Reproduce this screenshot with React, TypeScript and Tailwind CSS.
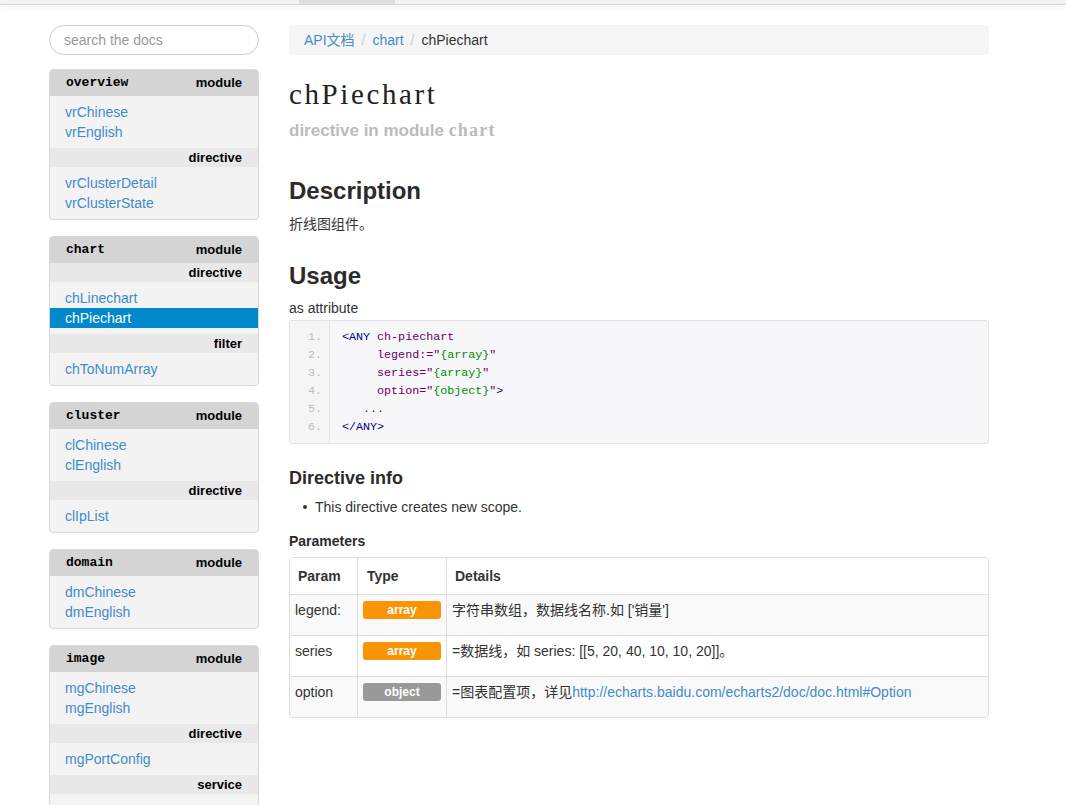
import React from 'react'

type Group = { kind?: string; items: string[] }
type Mod = { name: string; groups: Group[] }

const modules: Mod[] = [
    {
        name: 'overview',
        groups: [
            { items: ['vrChinese', 'vrEnglish'] },
            { kind: 'directive', items: ['vrClusterDetail', 'vrClusterState'] },
        ],
    },
    {
        name: 'chart',
        groups: [
            { kind: 'directive', items: ['chLinechart', 'chPiechart'] },
            { kind: 'filter', items: ['chToNumArray'] },
        ],
    },
    {
        name: 'cluster',
        groups: [
            { items: ['clChinese', 'clEnglish'] },
            { kind: 'directive', items: ['clIpList'] },
        ],
    },
    {
        name: 'domain',
        groups: [{ items: ['dmChinese', 'dmEnglish'] }],
    },
    {
        name: 'image',
        groups: [
            { items: ['mgChinese', 'mgEnglish'] },
            { kind: 'directive', items: ['mgPortConfig'] },
            { kind: 'service', items: [] },
        ],
    },
]

const active = 'chPiechart'

const ModuleCard = ({ mod }: { mod: Mod }) => {
    return (
        <div className="border border-[#d9d9d9] rounded-[4px] overflow-hidden bg-[#f3f3f3]">
            <div className="h-[26px] bg-[#d4d4d4] flex items-center justify-between pl-[16px] pr-[16px]">
                <span className="font-['Liberation_Mono',monospace] font-bold text-[13px] text-black">{mod.name}</span>
                <span className="font-bold text-[13px] text-black">module</span>
            </div>
            {mod.groups.map((g, i) => (
                <div key={i}>
                    {g.kind && (
                        <div className="h-[19px] bg-[#e8e8e8] flex items-center justify-end pr-[16px] font-bold text-[13px] text-black">
                            {g.kind}
                        </div>
                    )}
                    {g.items.length > 0 ? (
                        <ul className="py-[6px]">
                            {g.items.map((it) => (
                                <li
                                    key={it}
                                    className={
                                        it === active
                                            ? 'h-[20px] leading-[20px] pl-[15px] text-[14px] bg-[#0088cc] text-white'
                                            : 'h-[20px] leading-[20px] pl-[15px] text-[14px] text-[#428bca]'
                                    }
                                >
                                    {it}
                                </li>
                            ))}
                        </ul>
                    ) : (
                        <div className="h-[32px]" />
                    )}
                </div>
            ))}
        </div>
    )
}

const codeLines: React.ReactNode[] = [
    <>
        <span className="text-[#000088]">&lt;ANY</span> <span className="text-[#660066]">ch-piechart</span>
    </>,
    <>
        {'     '}
        <span className="text-[#660066]">legend:=</span>
        <span className="text-[#660066]">"</span>
        <span className="text-[#008800]">{'{array}'}</span>
        <span className="text-[#660066]">"</span>
    </>,
    <>
        {'     '}
        <span className="text-[#660066]">series=</span>
        <span className="text-[#660066]">"</span>
        <span className="text-[#008800]">{'{array}'}</span>
        <span className="text-[#660066]">"</span>
    </>,
    <>
        {'     '}
        <span className="text-[#660066]">option=</span>
        <span className="text-[#660066]">"</span>
        <span className="text-[#008800]">{'{object}'}</span>
        <span className="text-[#660066]">"</span>
        <span className="text-[#000088]">&gt;</span>
    </>,
    <>
        <span className="text-[#333]">{'   ...'}</span>
    </>,
    <>
        <span className="text-[#000088]">&lt;/ANY&gt;</span>
    </>,
]

const params = [
    {
        name: 'legend:',
        type: 'array',
        details: <>字符串数组，数据线名称.如 ['销量']</>,
    },
    {
        name: 'series',
        type: 'array',
        details: <>=数据线，如 series: [[5, 20, 40, 10, 10, 20]]。</>,
    },
    {
        name: 'option',
        type: 'object',
        details: (
            <>
                =图表配置项，详见
                <a href="#" className="text-[#428bca]">
                    http://echarts.baidu.com/echarts2/doc/doc.html#Option
                </a>
            </>
        ),
    },
]

const App = () => {
    return (
        <div className="min-h-screen bg-white text-[#333] text-[14px] font-['Liberation_Sans','Noto_Sans_CJK_SC',Arial,sans-serif]">
            {/* top nav edge */}
            <div className="h-[5px] bg-[#f2f2f2] border-b border-[#d4d4d4] shadow-[0_2px_6px_rgba(0,0,0,0.06)] flex">
                <div className="w-[299px]" />
                <div className="w-[96px] bg-[#dedede]" />
            </div>

            <div className="flex gap-[30px] pl-[49px] pt-[20px]">
                {/* Sidebar */}
                <aside className="w-[210px] shrink-0">
                    <div className="h-[30px] rounded-full border border-[#cccccc] flex items-center px-[14px] text-[14px] text-[#999]">
                        search the docs
                    </div>
                    <div className="mt-[14px] flex flex-col gap-[16px]">
                        {modules.map((m) => (
                            <ModuleCard key={m.name} mod={m} />
                        ))}
                    </div>
                </aside>

                {/* Main content */}
                <main className="w-[700px]">
                    <div className="h-[30px] bg-[#f5f5f5] rounded-[4px] flex items-center px-[15px] gap-[7px]">
                        <a href="#" className="text-[#428bca]">API文档</a>
                        <span className="text-[#cccccc]">/</span>
                        <a href="#" className="text-[#428bca]">chart</a>
                        <span className="text-[#cccccc]">/</span>
                        <span className="text-[#333]">chPiechart</span>
                    </div>

                    <h1 className="mt-[24px] leading-[30px] text-[29px] tracking-[2.6px] font-['Liberation_Serif',serif] text-[#222]">
                        chPiechart
                    </h1>
                    <div className="mt-[10px] leading-[22px] text-[17px] font-bold text-[#bbbbbb]">
                        directive in module{' '}
                        <span className="font-['Liberation_Serif',serif] text-[18px] tracking-[1.2px]">chart</span>
                    </div>

                    <h2 className="mt-[34px] leading-[30px] text-[24px] font-bold text-[#2b2b2b]">Description</h2>
                    <p className="mt-[8px] leading-[20px]">折线图组件。</p>

                    <h2 className="mt-[27px] leading-[30px] text-[24px] font-bold text-[#2b2b2b]">Usage</h2>
                    <p className="mt-[7px] leading-[20px]">as attribute</p>

                    <div className="mt-[2px] border border-[#e1e1e8] rounded-[3px] bg-[#f7f7f9] flex font-['Liberation_Mono',monospace] text-[11.7px]">
                        <div className="w-[40px] py-[7px] bg-[#f5f5f5] border-r border-[#e6e6e6] text-right pr-[7px] text-[#bbbbbb]">
                            {codeLines.map((_, i) => (
                                <div key={i} className="leading-[18px]">
                                    {i + 1}.
                                </div>
                            ))}
                        </div>
                        <div className="py-[7px] pl-[12px] whitespace-pre">
                            {codeLines.map((l, i) => (
                                <div key={i} className="leading-[18px]">
                                    {l}
                                </div>
                            ))}
                        </div>
                    </div>

                    <h3 className="mt-[22px] leading-[24px] text-[18px] font-bold text-[#2b2b2b]">Directive info</h3>
                    <ul className="mt-[7px] pl-[14px]">
                        <li className="leading-[20px] flex items-center gap-[8px]">
                            <span className="w-[4px] h-[4px] rounded-full bg-[#333]" />
                            This directive creates new scope.
                        </li>
                    </ul>

                    <h4 className="mt-[14px] leading-[20px] text-[14px] font-bold text-[#2b2b2b]">Parameters</h4>

                    <div className="mt-[6px] border border-[#dddddd] rounded-[4px] overflow-hidden">
                        <div className="grid grid-cols-[67px_89px_1fr] h-[36px] bg-white font-bold">
                            <div className="flex items-center pl-[8px]">Param</div>
                            <div className="flex items-center pl-[9px] border-l border-[#dddddd]">Type</div>
                            <div className="flex items-center pl-[8px] border-l border-[#dddddd]">Details</div>
                        </div>
                        {params.map((p, i) => (
                            <div
                                key={p.name}
                                className={
                                    i % 2 === 0
                                        ? 'grid grid-cols-[67px_89px_1fr] h-[41px] border-t border-[#dddddd] bg-[#f9f9f9]'
                                        : 'grid grid-cols-[67px_89px_1fr] h-[41px] border-t border-[#dddddd] bg-white'
                                }
                            >
                                <div className="pl-[5px] pt-[5px] leading-[20px]">{p.name}</div>
                                <div className="pl-[5px] pt-[5px] border-l border-[#dddddd]">
                                    <span
                                        className={
                                            p.type === 'array'
                                                ? 'mt-[1px] w-[78px] h-[18px] rounded-[3px] bg-[#f89406] text-white font-bold text-[12px] flex items-center justify-center'
                                                : 'mt-[1px] w-[78px] h-[18px] rounded-[3px] bg-[#999999] text-white font-bold text-[12px] flex items-center justify-center'
                                        }
                                    >
                                        {p.type}
                                    </span>
                                </div>
                                <div className="pl-[5px] pt-[5px] leading-[20px] border-l border-[#dddddd]">{p.details}</div>
                            </div>
                        ))}
                    </div>
                </main>
            </div>
        </div>
    )
}

export default App
